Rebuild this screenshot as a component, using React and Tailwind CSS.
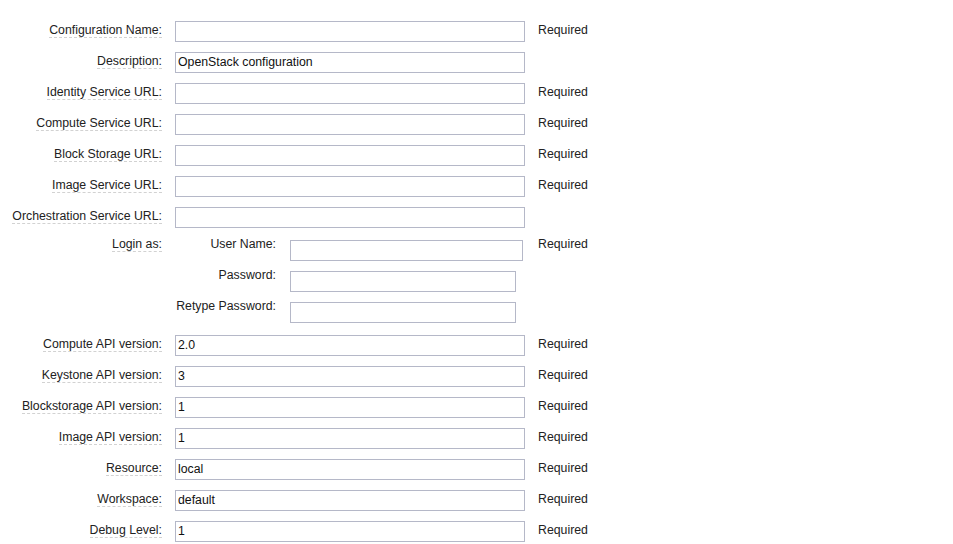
import React from "react";

const font = { fontFamily: '"Liberation Sans", Arial, sans-serif' };

function Label({ children }) {
  return (
    <span className="border-b border-dashed border-[#d2d2d2] leading-[14px]">{children}</span>
  );
}

function Input({ value = "", w = "w-[350px]", type = "text" }) {
  return (
    <input
      type={type}
      defaultValue={value}
      className={`${w} h-[21px] border border-[#b5b8c8] bg-white px-[2px] pt-0 pb-[2px] text-[12.3px] text-[#111] outline-none`}
      style={font}
    />
  );
}

function Row({ label, value, required = true }) {
  return (
    <div className="flex h-[31px] items-start">
      <div className="w-[162px] text-right pt-[7px] leading-[14px]">
        <Label>{label}</Label>
      </div>
      <div className="ml-[13px] mt-[5px] flex">
        <Input value={value} />
      </div>
      {required && <div className="ml-[13px] pt-[7px] leading-[14px]">Required</div>}
    </div>
  );
}

function InnerRow({ label, w, required, type }) {
  return (
    <div className="flex h-[31px] items-start">
      <div className="w-[101px] text-right pt-[2px] leading-[14px]">{label}</div>
      <div className="ml-[14px] mt-[5px] flex">
        <Input w={w} type={type} />
      </div>
      {required && <div className="ml-[15px] pt-[2px] leading-[14px]">Required</div>}
    </div>
  );
}

export default function App() {
  return (
    <div className="w-[953px] h-[544px] overflow-hidden bg-white text-[12.3px] text-[#222] pt-[16px]" style={font}>
      <Row label="Configuration Name:" />
      <Row label="Description:" value="OpenStack configuration" required={false} />
      <Row label="Identity Service URL:" />
      <Row label="Compute Service URL:" />
      <Row label="Block Storage URL:" />
      <Row label="Image Service URL:" />
      <Row label="Orchestration Service URL:" required={false} />
      <div className="flex py-[2px]">
        <div className="w-[162px] text-right pt-[2px] leading-[14px]">
          <Label>Login as:</Label>
        </div>
        <div className="ml-[13px] flex flex-col">
          <InnerRow label="User Name:" w="w-[233px]" required />
          <InnerRow label="Password:" w="w-[226px]" type="password" />
          <InnerRow label="Retype Password:" w="w-[226px]" type="password" />
        </div>
      </div>
      <Row label="Compute API version:" value="2.0" />
      <Row label="Keystone API version:" value="3" />
      <Row label="Blockstorage API version:" value="1" />
      <Row label="Image API version:" value="1" />
      <Row label="Resource:" value="local" />
      <Row label="Workspace:" value="default" />
      <Row label="Debug Level:" value="1" />
    </div>
  );
}
